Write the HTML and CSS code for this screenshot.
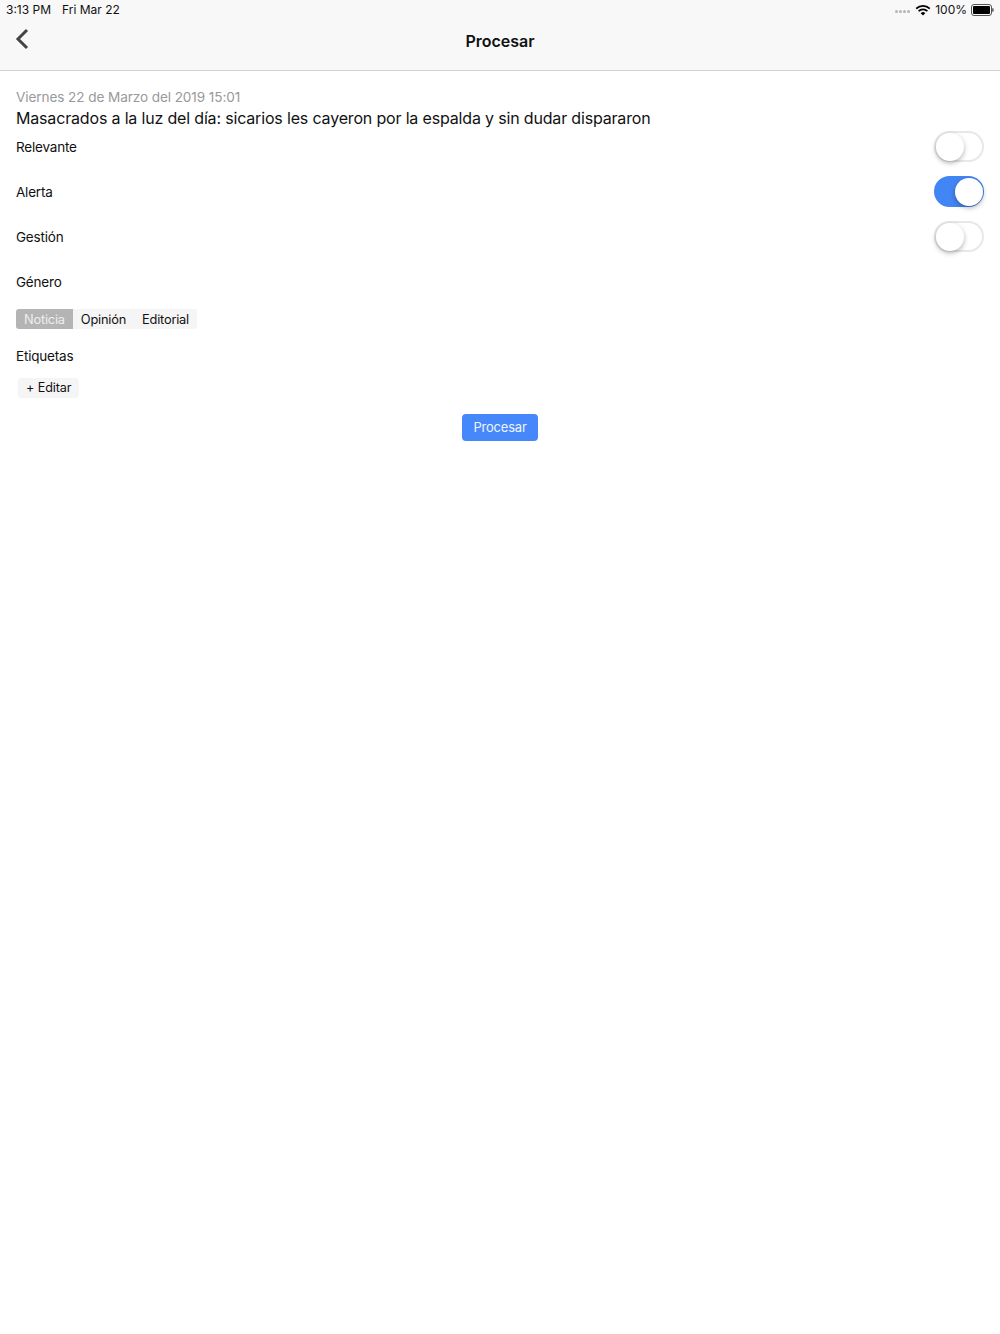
FILE: index.html
```html
<!DOCTYPE html>
<html lang="es">
    <head>
        <meta charset="utf-8">
        <title>Procesar</title>
        <link rel="stylesheet" href="styles.css">
    </head>

    <body>
        <header class="topbar">
            <div class="status">
                <span class="status-time">3:13 PM</span>
                <span class="status-date">Fri Mar 22</span>
                <span class="status-right">
                    <span class="signal"><i></i><i></i><i></i><i></i></span>
                    <svg class="wifi" width="16" height="12" viewBox="0 0 16 12">
                        <path d="M8 11.6 5.7 9.2a3.3 3.3 0 0 1 4.6 0Z" fill="#000"/>
                        <path d="M3.6 7.2a6.2 6.2 0 0 1 8.8 0" fill="none" stroke="#000" stroke-width="1.7"/>
                        <path d="M1.2 4.6a9.6 9.6 0 0 1 13.6 0" fill="none" stroke="#000" stroke-width="1.7"/>
                    </svg>
                    <span class="status-battery-text">100%</span>
                    <span class="battery"><span class="battery-fill"></span></span>
                    <span class="battery-tip"></span>
                </span>
            </div>
            <div class="navbar">
                <svg class="back" width="14" height="22" viewBox="0 0 14 22">
                    <path d="M12 2 3 11l9 9" fill="none" stroke="#444" stroke-width="3"/>
                </svg>
                <h1 class="nav-title">Procesar</h1>
            </div>
        </header>

        <main class="content">
            <div class="date">Viernes 22 de Marzo del 2019 15:01</div>
            <div class="headline">Masacrados a la luz del día: sicarios les cayeron por la espalda y sin dudar dispararon</div>

            <div class="rows">
                <div class="row">
                    <span>Relevante</span>
                    <span class="switch"><span class="knob"></span></span>
                </div>
                <div class="row">
                    <span>Alerta</span>
                    <span class="switch on"><span class="knob"></span></span>
                </div>
                <div class="row">
                    <span>Gestión</span>
                    <span class="switch"><span class="knob"></span></span>
                </div>
                <div class="row">
                    <span>Género</span>
                </div>
            </div>

            <div class="segments">
                <span class="segment active">Noticia</span>
                <span class="segment">Opinión</span>
                <span class="segment">Editorial</span>
            </div>

            <div class="label-tags">Etiquetas</div>
            <span class="edit-tag">+ Editar</span>

            <div class="actions">
                <button class="submit">Procesar</button>
            </div>
        </main>
    </body>
</html>
```

FILE: styles.css
```css
body {
    font-family: Inter, "Liberation Sans", sans-serif;
    margin: 0;
    background-color: #fff;
    color: #111;
    font-size: 13.5px;
    letter-spacing: -0.2px;
}

.topbar {
    height: 70px;
    background-color: #f8f8f8;
    border-bottom: 1px solid #d2d2d2;
}

.status {
    display: flex;
    align-items: center;
    height: 19px;
    padding: 0 6px;
    font-size: 12px;
    letter-spacing: 0;
    color: #111;
}

.status-date {
    margin-left: 11px;
}

.status-right {
    display: flex;
    align-items: center;
    margin-left: auto;
}

.signal {
    display: flex;
    gap: 1px;
    margin-right: 5px;
    margin-top: 4px;
}

.signal i {
    width: 3px;
    height: 3px;
    border-radius: 50%;
    background-color: #b5b5b5;
}

.wifi {
    margin-right: 4px;
}

.battery {
    display: block;
    width: 17px;
    height: 8px;
    margin-left: 4px;
    padding: 1px;
    border: 1px solid #555;
    border-radius: 3px;
}

.battery-fill {
    display: block;
    height: 100%;
    background-color: #000;
    border-radius: 1px;
}

.battery-tip {
    width: 2px;
    height: 4px;
    background-color: #777;
    border-radius: 0 2px 2px 0;
}

.navbar {
    display: flex;
    align-items: center;
    justify-content: center;
    position: relative;
    height: 44px;
}

.back {
    position: absolute;
    left: 15px;
    top: 9px;
}

.nav-title {
    margin: 0;
    font-size: 16px;
    font-weight: 600;
    letter-spacing: 0;
}

.content {
    padding: 16px 16px 0;
}

.date {
    margin-bottom: 1px;
    font-size: 13.6px;
    line-height: 20px;
    letter-spacing: -0.1px;
    color: #999;
}

.headline {
    font-size: 16px;
    line-height: 21px;
    letter-spacing: -0.17px;
}

.rows {
    margin-top: -5px;
}

.row {
    display: flex;
    justify-content: space-between;
    align-items: center;
    height: 45px;
}

.switch {
    display: block;
    box-sizing: border-box;
    width: 50px;
    height: 31px;
    margin-top: -1px;
    padding: 1px;
    border: 2px solid #e8e8e8;
    border-radius: 16px;
    background-color: #fff;
}

.knob {
    display: block;
    width: 28px;
    height: 28px;
    margin: -1px 0 0 -1px;
    border-radius: 50%;
    background-color: #fff;
    box-shadow: 0 2px 5px rgba(0,0,0,0.3);
}

.switch.on {
    background-color: #4285f4;
    border-color: #4285f4;
}

.switch.on .knob {
    margin-left: 18px;
}

.segments {
    display: inline-flex;
    margin-top: 5px;
    background-color: #f5f5f5;
    border-radius: 3px;
    vertical-align: top;
}

.segment {
    padding: 1px 8px 0;
    line-height: 19px;
    font-size: 12.8px;
    letter-spacing: -0.2px;
}

.segment.active {
    background-color: #b4b4b4;
    color: #eee;
    border-radius: 3px 0 0 3px;
}

.label-tags {
    margin-top: 18px;
    line-height: 19px;
}

.edit-tag {
    display: inline-block;
    margin: 12px 0 0 2px;
    padding: 0 8px;
    line-height: 20px;
    font-size: 12.6px;
    letter-spacing: -0.1px;
    background-color: #f5f5f5;
    border-radius: 4px;
}

.actions {
    display: flex;
    justify-content: center;
    margin-top: 16px;
}

.submit {
    width: 76px;
    height: 27px;
    padding: 0 0 1px;
    font-family: inherit;
    font-size: 13px;
    letter-spacing: -0.2px;
    border: none;
    border-radius: 4px;
    background-color: #4688fb;
    color: #eef4ff;
}
```
